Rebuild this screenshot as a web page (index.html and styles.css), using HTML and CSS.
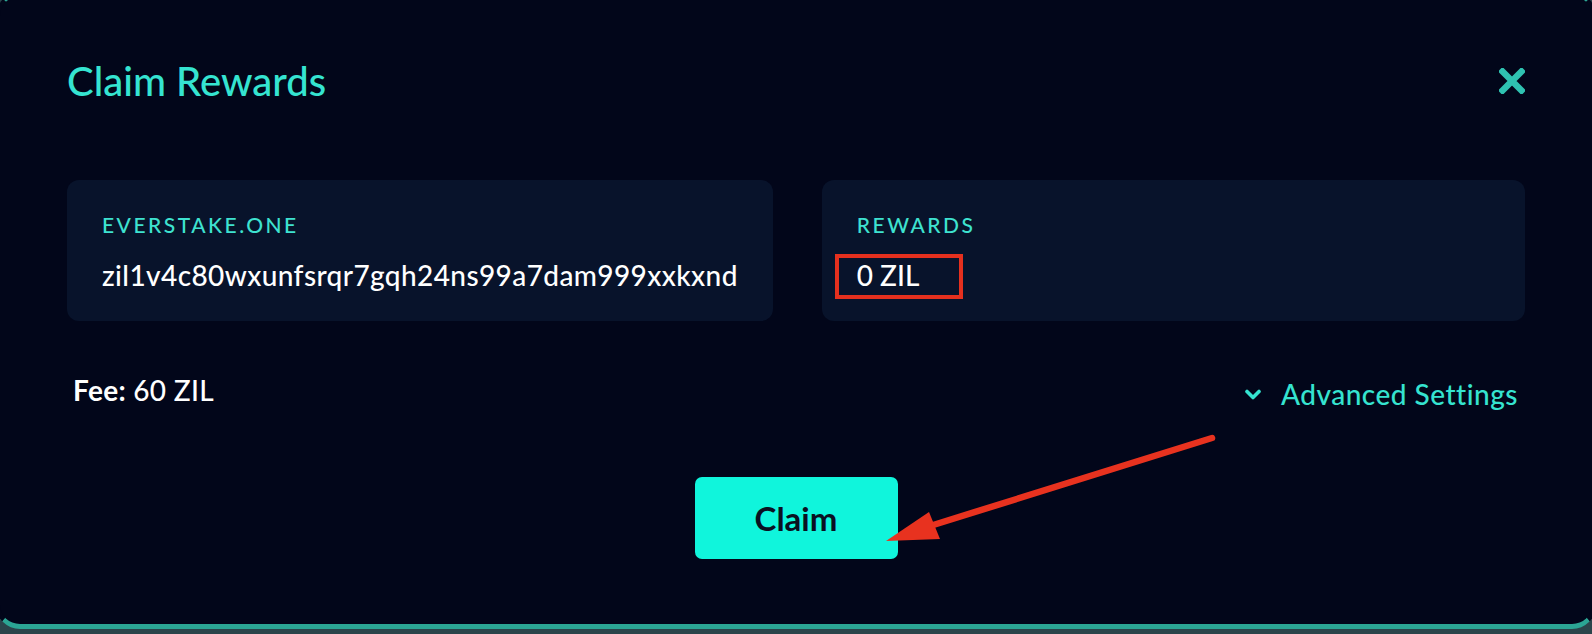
FILE: index.html
```html
<!DOCTYPE html>
<html lang="en">
<head>
<meta charset="utf-8">
<title>Claim Rewards</title>
<link rel="stylesheet" href="styles.css">
</head>
<body>
<div class="modal">
  <div class="modal-head">
    <h1 class="modal-title">Claim Rewards</h1>
    <button class="close" aria-label="Close">
      <svg width="26" height="26" viewBox="0 0 26 26"><path d="M3.5 3.5 L22.5 22.5 M22.5 3.5 L3.5 22.5" stroke="#2fc2b1" stroke-width="6.5" stroke-linecap="square" fill="none"/></svg>
    </button>
  </div>
  <div class="cards">
    <div class="card">
      <div class="card-label">EVERSTAKE.ONE</div>
      <div class="card-value address">zil1v4c80wxunfsrqr7gqh24ns99a7dam999xxkxnd</div>
    </div>
    <div class="card">
      <div class="card-label">REWARDS</div>
      <div class="card-value highlight">0 ZIL<span class="mark"></span></div>
    </div>
  </div>
  <div class="fee-row">
    <div class="fee"><b>Fee:</b> 60 ZIL</div>
    <div class="advanced">
      <svg width="16" height="11" viewBox="0 0 16 11"><path d="M2 2.5 L8 8.5 L14 2.5" stroke="#35e3d0" stroke-width="3.6" fill="none" stroke-linecap="round" stroke-linejoin="round"/></svg>
      <span>Advanced Settings</span>
    </div>
  </div>
  <div class="actions">
    <button class="claim">Claim</button>
  </div>
</div>
<svg class="annot" width="1592" height="634" viewBox="0 0 1592 634">
  <line x1="1212" y1="438" x2="930" y2="526" stroke="#e8321f" stroke-width="6.5" stroke-linecap="round"/>
  <polygon points="886,541 929,512 940,539" fill="#e8321f"/>
</svg>
</body>
</html>
```
FILE: styles.css
```css
html, body {
  margin: 0;
  padding: 0;
}
html {
  overflow: hidden;
  background: #2b444b;
}
body {
  height: 634px;
  font-family: "Lato", "Noto Sans", sans-serif;
}
.modal {
  box-sizing: border-box;
  margin: -8px 0 0 -4px;
  width: 1600px;
  height: 637px;
  background: #02061a;
  border: 4px solid #2ba594;
  border-right-color: #02061a;
  border-left-color: #02061a;
  border-bottom-width: 5px;
  border-radius: 24px;
  padding: 61px 67px 0 67px;
}
.modal-head {
  display: flex;
  align-items: center;
  justify-content: space-between;
}
.modal-title {
  margin: 0;
  font-size: 40px;
  line-height: 48px;
  font-weight: 500;
  color: #35e4d1;
}
.close {
  background: none;
  border: 0;
  padding: 0;
  width: 26px;
  height: 26px;
  display: flex;
}
.cards {
  margin-top: 75px;
  display: grid;
  grid-template-columns: 1fr 1fr;
  gap: 49px;
}
.card {
  background: #08132b;
  border-radius: 12px;
  padding: 33px 35px 29px;
}
.card-label {
  font-size: 21px;
  line-height: 24px;
  font-weight: 500;
  letter-spacing: 2.5px;
  color: #3ee2d0;
}
.card-value {
  margin-top: 21px;
  font-size: 28px;
  line-height: 34px;
  font-weight: 500;
  color: #ffffff;
}
.address {
  letter-spacing: 0.4px;
}
.highlight {
  position: relative;
  display: inline-block;
}
.mark {
  position: absolute;
  left: -22px;
  top: -4px;
  width: 128px;
  height: 45px;
  box-sizing: border-box;
  border: 4px solid #e5301e;
}
.fee-row {
  margin-top: 52px;
  padding: 0 7px 0 6px;
  display: flex;
  justify-content: space-between;
  align-items: flex-start;
}
.fee {
  font-size: 28px;
  line-height: 34px;
  font-weight: 500;
  letter-spacing: 0.3px;
  color: #ffffff;
}
.fee b {
  font-weight: 700;
}
.advanced {
  padding-top: 4px;
  display: flex;
  align-items: center;
  gap: 20px;
  font-size: 28px;
  line-height: 34px;
  font-weight: 500;
  letter-spacing: 0.5px;
  color: #35e3d0;
}
.actions {
  margin-top: 66px;
  display: flex;
  justify-content: center;
}
.claim {
  width: 203px;
  height: 82px;
  border: 0;
  border-radius: 7px;
  background: #10f5dc;
  color: #0a1122;
  font-family: "Lato", "Noto Sans", sans-serif;
  font-size: 33px;
  font-weight: 700;
}
.annot {
  position: absolute;
  left: 0;
  top: 0;
  pointer-events: none;
}
```
